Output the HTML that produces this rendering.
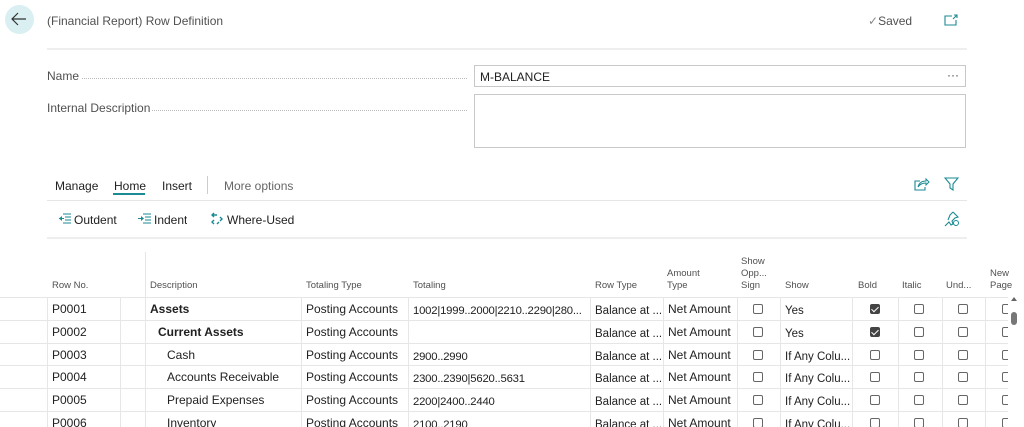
<!DOCTYPE html>
<html><head><meta charset="utf-8"><style>
*{margin:0;padding:0;box-sizing:border-box}
body{width:1024px;height:427px;overflow:hidden;background:#fff;font-family:"Liberation Sans",sans-serif;color:#212121;position:relative}
.a{position:absolute;white-space:nowrap}
.hl{position:absolute;height:1px;background:#e6e6e6}
.vl{position:absolute;width:1px;background:#e6e6e6}
.t{font-size:12px;color:#212121;overflow:hidden;line-height:14px}
.s{padding-top:2px;height:17px}
.h{font-size:9.5px;color:#505050;line-height:12px}
.cb{position:absolute;width:10px;height:10px;border:1px solid #666;border-radius:2px;background:#fff}
.cb.on{background:#444;border-color:#444}
.cb.on::after{content:"";position:absolute;left:2px;top:0px;width:3px;height:6px;border:solid #fff;border-width:0 1.5px 1.5px 0;transform:rotate(45deg)}
#clip{position:absolute;left:0;top:0;width:1008px;height:427px;overflow:hidden}
</style></head><body>
<div class="a" style="left:5px;top:5px;width:29px;height:29px;border-radius:50%;background:#d9eff1"></div>
<svg class="a" style="left:11px;top:12px" width="16" height="14" viewBox="0 0 16 14"><path d="M7 1L1 7l6 6M1 7h14" fill="none" stroke="#333" stroke-width="1.2"/></svg>
<div class="a" style="left:47px;top:14px;font-size:12px;color:#505050">(Financial Report) Row Definition</div>
<div class="a" style="left:868px;top:14px;font-size:12px;color:#505050"><span style="color:#888">✓</span>Saved</div>
<svg class="a" style="left:944px;top:14px" width="14" height="12" viewBox="0 0 14 12"><path d="M8 2H1v9h11V6" fill="none" stroke="#1a8a94" stroke-width="1.1"/><path d="M9 5l4-4M10 1h3v3" fill="none" stroke="#1a8a94" stroke-width="1.1"/></svg>
<div class="hl" style="left:47px;top:48px;width:920px;height:2px;background:#eee"></div>
<div class="a" style="left:47px;top:69px;font-size:12px;color:#505050">Name</div>
<div class="a" style="left:82px;top:78px;width:385px;border-top:1px dotted #bbb"></div>
<div class="a" style="left:474px;top:65px;width:492px;height:22px;border:1px solid #c8c8c8;font-size:12px;padding:4px 5px">M-BALANCE<span style="position:absolute;right:6px;top:2px;color:#444">···</span></div>
<div class="a" style="left:47px;top:101px;font-size:12px;color:#505050">Internal Description</div>
<div class="a" style="left:152px;top:110px;width:315px;border-top:1px dotted #bbb"></div>
<div class="a" style="left:474px;top:94px;width:492px;height:54px;border:1px solid #c8c8c8"></div>
<div class="a t" style="left:55px;top:179px">Manage</div>
<div class="a t" style="left:114px;top:179px">Home</div>
<div class="a" style="left:113px;top:193px;width:32px;height:2px;background:#1a8a94"></div>
<div class="a t" style="left:162px;top:179px">Insert</div>
<div class="vl" style="left:207px;top:176px;height:18px;background:#ccc"></div>
<div class="a" style="left:224px;top:179px;font-size:12px;color:#666">More options</div>
<svg class="a" style="left:914px;top:177px" width="16" height="14" viewBox="0 0 16 14"><path d="M6 4H1v9h10v-3" fill="none" stroke="#1a8a94" stroke-width="1.1"/><path d="M4 10c1-4 4-6 8-6V2l3 3-3 3V6c-3 0-6 1-8 4z" fill="none" stroke="#1a8a94" stroke-width="1"/></svg>
<svg class="a" style="left:944px;top:177px" width="15" height="14" viewBox="0 0 15 14"><path d="M1 1h13L9 7v6L6 11V7z" fill="none" stroke="#1a8a94" stroke-width="1.1"/></svg>
<div class="hl" style="left:47px;top:200px;width:920px"></div>
<svg class="a" style="left:58px;top:213px" width="14" height="12" viewBox="0 0 14 12"><path d="M5 1h8M7 4h6M7 7h6M5 10h8" stroke="#1a8a94" stroke-width="1.1"/><path d="M4 3L1 5.5 4 8z" fill="#1a8a94"/><path d="M1 5.5h5" stroke="#1a8a94"/></svg>
<div class="a t" style="left:74px;top:213px">Outdent</div>
<svg class="a" style="left:138px;top:213px" width="14" height="12" viewBox="0 0 14 12"><path d="M5 1h8M7 4h6M7 7h6M5 10h8" stroke="#1a8a94" stroke-width="1.1"/><path d="M3 3l3 2.5L3 8z" fill="#1a8a94"/><path d="M0 5.5h4" stroke="#1a8a94"/></svg>
<div class="a t" style="left:154px;top:213px">Indent</div>
<svg class="a" style="left:211px;top:212px" width="12" height="14" viewBox="0 0 12 14"><path d="M3 1l-2 2 2 2M1 3h5M9 5l2 2-2 2M6 12l2-2M3 8l-2 2 2 2" fill="none" stroke="#1a8a94" stroke-width="1.4"/></svg>
<div class="a t" style="left:227px;top:213px">Where-Used</div>
<svg class="a" style="left:944px;top:211px" width="16" height="16" viewBox="0 0 16 16"><path d="M9 1l5 5-3 1-3 3 1 3-2 1-2-3-4 4M4 9l2-5 3-3" fill="none" stroke="#1a8a94" stroke-width="1.1"/><circle cx="12" cy="12" r="2.5" fill="none" stroke="#1a8a94"/></svg>
<div class="hl" style="left:47px;top:237px;width:920px;height:2px;background:#eee"></div>
<div class="vl" style="left:145px;top:252px;height:45px"></div>
<div class="a h" style="left:52px;top:280px">Row No.</div>
<div class="a h" style="left:150px;top:280px">Description</div>
<div class="a h" style="left:306px;top:280px">Totaling Type</div>
<div class="a h" style="left:413px;top:280px">Totaling</div>
<div class="a h" style="left:595px;top:280px">Row Type</div>
<div class="a h" style="left:667px;top:268px">Amount<br>Type</div>
<div class="a h" style="left:741px;top:256px">Show<br>Opp...<br>Sign</div>
<div class="a h" style="left:785px;top:280px">Show</div>
<div class="a h" style="left:858px;top:280px">Bold</div>
<div class="a h" style="left:902px;top:280px">Italic</div>
<div class="a h" style="left:946px;top:280px">Und...</div>
<div class="a h" style="left:990px;top:268px">New<br>Page</div>
<div id="clip"></div>
<div class="a" style="left:1011px;top:297px;width:0;height:0;border-left:3px solid transparent;border-right:3px solid transparent;border-bottom:4px solid #666"></div>
<div class="a" style="left:1011px;top:312px;width:6px;height:13px;border-radius:3px;background:#777"></div>
<script>
var rows=[["P0001","<b>Assets</b>",0,"1002|1999..2000|2210..2290|280...","Yes",1],
["P0002","<b>Current Assets</b>",8,"","Yes",1],
["P0003","Cash",17,"2900..2990","If Any Colu...",0],
["P0004","Accounts Receivable",17,"2300..2390|5620..5631","If Any Colu...",0],
["P0005","Prepaid Expenses",17,"2200|2400..2440","If Any Colu...",0],
["P0006","Inventory",17,"2100..2190","If Any Colu...",0]];
var h="",cols=[47,120,145,301,408,590,663,737,780,852,898,942,985];
h+='<div class="hl" style="left:0;top:297px;width:1010px"></div>';
rows.forEach(function(r,i){var y=297+i*22.8;
h+='<div class="hl" style="left:0;top:'+(y+22.8)+'px;width:1010px"></div>';
cols.forEach(function(c){h+='<div class="vl" style="left:'+c+'px;top:'+y+'px;height:23px"></div>'});
var ty=y+5;
h+='<div class="a t" style="left:52px;top:'+ty+'px">'+r[0]+'</div>';
h+='<div class="a t" style="left:'+(150+r[2])+'px;top:'+ty+'px">'+r[1]+'</div>';
h+='<div class="a t" style="left:306px;top:'+ty+'px">Posting Accounts</div>';
h+='<div class="a t s" style="left:413px;top:'+ty+'px;width:174px;font-size:11.3px;letter-spacing:-0.2px">'+r[3]+'</div>';
h+='<div class="a t s" style="left:595px;top:'+ty+'px;width:66px;font-size:11.5px">Balance at ...</div>';
h+='<div class="a t" style="left:668px;top:'+ty+'px">Net Amount</div>';
h+='<div class="a t s" style="left:785px;top:'+ty+'px;width:66px;font-size:11.5px">'+r[4]+'</div>';
var cy=y+7;
h+='<div class="cb" style="left:753px;top:'+cy+'px"></div>';
h+='<div class="cb'+(r[5]?' on':'')+'" style="left:870px;top:'+cy+'px"></div>';
h+='<div class="cb" style="left:914px;top:'+cy+'px"></div>';
h+='<div class="cb" style="left:958px;top:'+cy+'px"></div>';
h+='<div class="cb" style="left:1002px;top:'+cy+'px"></div>';
});
document.getElementById("clip").innerHTML=h;
</script>
</body></html>
